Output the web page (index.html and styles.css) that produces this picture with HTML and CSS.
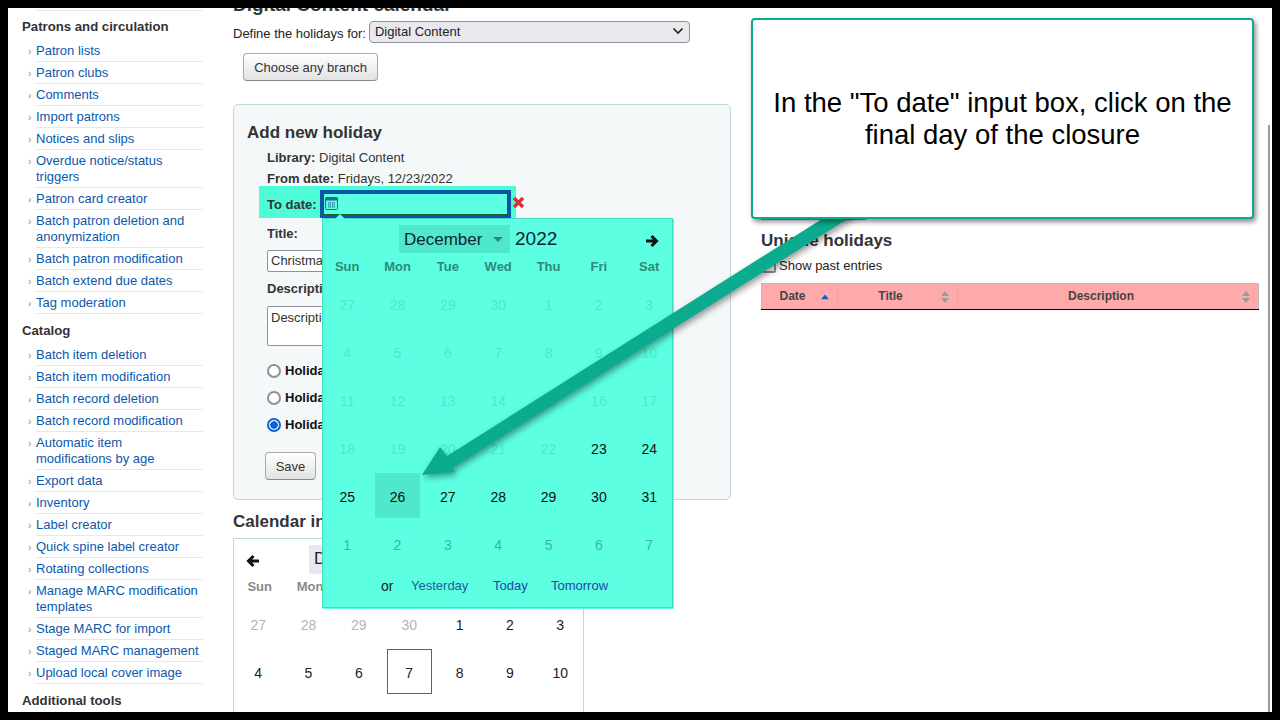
FILE: index.html
```html
<!DOCTYPE html>
<html>
    <head>
        <meta charset="utf-8">
        <title>Holidays calendar</title>
        <link rel="stylesheet" href="styles.css">
    </head>
    <body>
        <div class="screen">
            <nav class="sidebar">
                <h5>Patrons and circulation</h5>
                <ul>
                    <li><a>Patron lists</a></li>
                    <li><a>Patron clubs</a></li>
                    <li><a>Comments</a></li>
                    <li><a>Import patrons</a></li>
                    <li><a>Notices and slips</a></li>
                    <li><a>Overdue notice/status triggers</a></li>
                    <li><a>Patron card creator</a></li>
                    <li><a>Batch patron deletion and anonymization</a></li>
                    <li><a>Batch patron modification</a></li>
                    <li><a>Batch extend due dates</a></li>
                    <li><a>Tag moderation</a></li>
                </ul>
                <h5>Catalog</h5>
                <ul>
                    <li><a>Batch item deletion</a></li>
                    <li><a>Batch item modification</a></li>
                    <li><a>Batch record deletion</a></li>
                    <li><a>Batch record modification</a></li>
                    <li><a>Automatic item<br>modifications by age</a></li>
                    <li><a>Export data</a></li>
                    <li><a>Inventory</a></li>
                    <li><a>Label creator</a></li>
                    <li><a>Quick spine label creator</a></li>
                    <li><a>Rotating collections</a></li>
                    <li><a>Manage MARC modification templates</a></li>
                    <li><a>Stage MARC for import</a></li>
                    <li><a>Staged MARC management</a></li>
                    <li><a>Upload local cover image</a></li>
                </ul>
                <h5>Additional tools</h5>
            </nav>

            <main class="main">
                <h2 class="page-title">Digital Content calendar</h2>
                <div class="branch-row">
                    <span class="branch-label">Define the holidays for:</span>
                    <div class="select-box">
                        <span>Digital Content</span>
                        <svg width="12" height="8" viewBox="0 0 12 8"><path d="M1.500 1.500 6 6l4.500-4.500" fill="none" stroke="#222" stroke-width="1.600"/></svg>
                    </div>
                </div>
                <button class="btn btn-branch">Choose any branch</button>

                <section class="panel">
                    <h3>Add new holiday</h3>
                    <p class="line line-lib"><b>Library:</b> Digital Content</p>
                    <p class="line line-from"><b>From date:</b> Fridays, 12/23/2022</p>
                    <div class="to-date">
                        <b>To date:</b>
                        <div class="date-input">
                            <svg width="13" height="13" viewBox="0 0 13 13"><rect x="0.500" y="0.500" width="12" height="12" rx="1" fill="none" stroke="#1c6f8c"/><rect x="0.500" y="0.500" width="12" height="3" fill="#1c6f8c"/><path d="M3 6h7M3 8h7M3 10h7M5 5v6M8 5v6" stroke="#1c6f8c" stroke-dasharray="1 1"/></svg>
                        </div>
                        <svg class="clear-x" width="13" height="13" viewBox="0 0 13 13"><path d="M2 2l9 9M11 2l-9 9" stroke="#d3303c" stroke-width="3.400"/></svg>
                    </div>
                    <p class="line field-label"><b>Title:</b></p>
                    <div class="text-input">Christmas</div>
                    <p class="line field-label line-desc"><b>Description:</b></p>
                    <div class="text-area">Description</div>
                    <div class="radio-row"><span class="radio"></span><b>Holiday on a range</b></div>
                    <div class="radio-row"><span class="radio"></span><b>Holiday repeated</b></div>
                    <div class="radio-row"><span class="radio radio-on"></span><b>Holidays on a range</b></div>
                    <button class="btn btn-save">Save</button>
                </section>

                <h3 class="cal-title">Calendar information</h3>
                <div class="calendar">
                    <div class="cal-head">
                        <svg class="cal-arrow" width="14" height="14" viewBox="0 0 14 14"><path d="M13 7H3M7.500 2 2.500 7l5 5" fill="none" stroke="#111" stroke-width="3"/></svg>
                        <span class="month month-back">December</span>
                    </div>
                    <div class="cal-grid">
                        <span class="wd">Sun</span><span class="wd">Mon</span><span class="wd">Tue</span><span class="wd">Wed</span><span class="wd">Thu</span><span class="wd">Fri</span><span class="wd">Sat</span>
                        <span class="day back-old">27</span><span class="day back-old">28</span><span class="day back-old">29</span><span class="day back-old">30</span><span class="day">1</span><span class="day">2</span><span class="day">3</span>
                        <span class="day">4</span><span class="day">5</span><span class="day">6</span><span class="day"><i class="today">7</i></span><span class="day">8</span><span class="day">9</span><span class="day">10</span>
                    </div>
                </div>
            </main>

            <aside class="side">
                <div class="hidden-btn"></div>
                <h3>Unique holidays</h3>
                <label class="past"><span class="check"></span>Show past entries</label>
                <table class="holidays">
                    <thead>
                        <tr>
                            <th class="col-date">Date<svg class="sort" width="8" height="5" viewBox="0 0 8 5"><path d="M4 0l4 5H0z" fill="#0b5fc4"/></svg></th>
                            <th class="col-title">Title<svg class="sort" width="8" height="12" viewBox="0 0 8 12"><path d="M4 0l4 5H0zM4 12 0 7h8z" fill="#9a9a9a"/></svg></th>
                            <th>Description<svg class="sort" width="8" height="12" viewBox="0 0 8 12"><path d="M4 0l4 5H0zM4 12 0 7h8z" fill="#9a9a9a"/></svg></th>
                        </tr>
                    </thead>
                </table>
            </aside>

            <!-- date picker open over the form -->
            <div class="picker">
                <span class="picker-notch"></span>
                <div class="cal-head picker-head">
                    <span class="month">December<svg width="10" height="5" viewBox="0 0 10 5"><path d="M0 0h10L5 5z" fill="#2c8a78"/></svg></span>
                    <span class="year">2022</span>
                    <svg class="cal-arrow" width="14" height="14" viewBox="0 0 14 14"><path d="M1 7h10M6.500 2l5 5-5 5" fill="none" stroke="#111" stroke-width="3"/></svg>
                </div>
                <div class="cal-grid">
                    <span class="wd">Sun</span><span class="wd">Mon</span><span class="wd">Tue</span><span class="wd">Wed</span><span class="wd">Thu</span><span class="wd">Fri</span><span class="wd">Sat</span>
                    <span class="day off">27</span><span class="day off">28</span><span class="day off">29</span><span class="day off">30</span><span class="day off">1</span><span class="day off">2</span><span class="day off">3</span>
                    <span class="day off">4</span><span class="day off">5</span><span class="day off">6</span><span class="day off">7</span><span class="day off">8</span><span class="day off">9</span><span class="day off">10</span>
                    <span class="day off">11</span><span class="day off">12</span><span class="day off">13</span><span class="day off">14</span><span class="day off">15</span><span class="day off">16</span><span class="day off">17</span>
                    <span class="day off">18</span><span class="day off">19</span><span class="day off">20</span><span class="day off">21</span><span class="day off">22</span><span class="day">23</span><span class="day">24</span>
                    <span class="day">25</span><span class="day"><i class="picked">26</i></span><span class="day">27</span><span class="day">28</span><span class="day">29</span><span class="day">30</span><span class="day">31</span>
                    <span class="day next">1</span><span class="day next">2</span><span class="day next">3</span><span class="day next">4</span><span class="day next">5</span><span class="day next">6</span><span class="day next">7</span>
                </div>
                <div class="shortcuts">
                    <span class="or">or</span>
                    <a class="sc-y">Yesterday</a>
                    <a class="sc-t">Today</a>
                    <a class="sc-m">Tomorrow</a>
                </div>
            </div>

            <svg class="arrow" width="1264" height="704" viewBox="8 8 1264 704">
                <path d="M422 475 440 447 447 456 860 195 868 206 452 468 455 472Z" fill="#0aab8e"/>
            </svg>

            <div class="callout">In the "To date" input box, click on the final day of the closure</div>

            <div class="scroll-line"></div>
        </div>
    </body>
</html>
```

FILE: styles.css
```css
* {
    box-sizing: border-box;
}

body {
    margin: 0;
    height: 720px;
    padding: 8px;
    background: #000;
    font-family: "Liberation Sans", Arial, sans-serif;
    font-size: 13px;
    color: #333;
    overflow: hidden;
}

.screen {
    position: relative;
    display: flex;
    width: 1264px;
    height: 704px;
    background: #fff;
    overflow: hidden;
}

/* sidebar */

.sidebar {
    flex: none;
    width: 225px;
    padding: 2px 0 0 14px;
}

.sidebar h5 {
    margin: 9px 0 5px;
    font-size: 13.200px;
    line-height: 16px;
    color: #333;
}

.sidebar h5:first-child {
    margin: 0 0 6px;
    padding-top: 9px;
    background: linear-gradient(#e8e8e8, #e8e8e8) 14px 0 / 167px 1px no-repeat;
    height: 24px;
}

.sidebar ul {
    margin: 0;
    padding: 0;
    list-style: none;
    width: 181px;
}

.sidebar li {
    position: relative;
    margin-left: 14px;
    padding: 3px 0 2px;
    border-bottom: 1px solid #e8e8e8;
    line-height: 16px;
}

.sidebar li::before {
    content: "›";
    position: absolute;
    left: -8px;
    top: 4px;
    color: #888;
    font-size: 10px;
}

.sidebar a {
    color: #0a58ad;
}

/* middle column */

.main {
    flex: none;
    width: 498px;
    margin-right: 30px;
    margin-top: -13px;
}

.page-title {
    margin: 0;
    font-size: 19px;
    line-height: 20px;
    color: #333;
}

.branch-row {
    display: flex;
    align-items: center;
    gap: 3px;
    height: 22px;
    margin-top: 6px;
    color: #222;
}

.branch-label {
    padding-top: 2px;
}

.select-box {
    display: flex;
    align-items: center;
    justify-content: space-between;
    width: 321px;
    height: 22px;
    padding: 0 5px 2px 5px;
    background: #e9e9ed;
    border: 1px solid #8f8f9d;
    border-radius: 4px;
}

.btn {
    display: block;
    height: 28px;
    padding: 0;
    font: inherit;
    color: #333;
    background: linear-gradient(#fff, #e2e2e2);
    border: 1px solid #a9a9a9;
    border-bottom-color: #888;
    border-radius: 4px;
}

.btn-branch {
    width: 135px;
    margin: 10px 0 23px 10px;
}

.panel {
    height: 396px;
    padding: 19px 0 0 13px;
    background: #f4f8f9;
    border: 1px solid #bcd9dc;
    border-radius: 5px;
}

.panel h3 {
    margin: 0 0 7px;
    font-size: 17px;
    line-height: 18px;
    color: #333;
}

.line {
    margin: 0 0 0 20px;
    height: 21px;
    line-height: 16px;
}

.line-lib {
    padding-top: 1px;
}

.line-from {
    height: 16px;
    padding-top: 1px;
}

.to-date {
    display: flex;
    align-items: flex-start;
    width: 257px;
    height: 32px;
    margin-left: 12px;
    padding: 4px 0 0 8px;
    background: #4ffcd8;
}

.to-date b {
    flex: none;
    width: 53px;
    padding-top: 7px;
    line-height: 16px;
}

.date-input {
    flex: none;
    width: 191px;
    height: 28px;
    padding: 4px 0 0 2px;
    background: #5cffe1;
    border: 3px solid #0b58a6;
    box-shadow: inset 0 0 0 1px #1c5a30;
}

.clear-x {
    flex: none;
    margin: 6px 0 0 1px;
}

.field-label {
    margin-top: 8px;
}

.text-input {
    width: 200px;
    height: 22px;
    margin: 3px 0 0 20px;
    padding: 2px 3px;
    background: #fff;
    border: 1px solid #8f8f9d;
    border-radius: 2px;
}

.line-desc {
    margin-top: 9px;
}

.text-area {
    width: 200px;
    height: 40px;
    margin: 4px 0 10px 20px;
    padding: 3px;
    background: #fff;
    border: 1px solid #8f8f9d;
    border-radius: 2px;
}

.radio-row {
    display: flex;
    align-items: center;
    gap: 4px;
    height: 27px;
    margin-left: 20px;
    padding-top: 2px;
    color: #111;
}

.radio {
    width: 14px;
    height: 14px;
    border: 2px solid #8f8f9d;
    border-radius: 50%;
    background: #fff;
}

.radio-on {
    border-color: #0b62d6;
    background: radial-gradient(circle, #0b62d6 0 3.500px, #fff 4px);
}

.btn-save {
    width: 51px;
    margin: 15px 0 0 18px;
}

.cal-title {
    margin: 12px 0 6px;
    font-size: 17px;
    line-height: 20px;
    color: #333;
}

.calendar {
    width: 351px;
    height: 200px;
    border: 1px solid #b6dcdc;
    border-bottom: 0;
}

.cal-head {
    position: relative;
    height: 39px;
}

.calendar .cal-arrow {
    position: absolute;
    left: 12px;
    top: 15px;
}

.calendar .wd {
    padding-left: 3px;
}

.month-back {
    position: absolute;
    left: 75px;
    top: 6px;
    height: 29px;
    padding: 4px 5px;
    background: #e9e9ed;
    font-size: 17px;
    color: #222;
}

.cal-grid {
    display: grid;
    grid-template-columns: repeat(7, 50.350px);
    grid-template-rows: 23px;
    grid-auto-rows: 48px;
    margin-left: -1px;
}

.wd {
    display: flex;
    justify-content: center;
    margin-top: 1px;
    font-weight: bold;
    line-height: 16px;
    color: #8a8a8a;
    align-self: start;
}

.day {
    display: flex;
    align-items: center;
    justify-content: center;
    font-size: 14px;
    color: #222;
}

.day i {
    display: flex;
    align-items: center;
    justify-content: center;
    width: 45px;
    height: 45px;
    margin-top: -3px;
    padding-top: 3px;
    font-style: normal;
}

.back-old {
    color: #b4b4b4;
}

.today {
    border: 1px solid #5f6f1f;
}

/* date picker */

.picker {
    position: absolute;
    left: 314px;
    top: 210px;
    width: 351px;
    height: 390px;
    background: #5cffe1;
    border: 1px solid #3fdcc0;
    box-shadow: 1px 1px 0 #5cffe1;
}

.picker-notch {
    position: absolute;
    left: 12px;
    top: -5px;
    width: 0;
    height: 0;
    border: 5px solid transparent;
    border-top: 0;
    border-bottom-color: #5cffe1;
}

.picker-head {
    display: flex;
    padding: 6px 0 0 76px;
}

.picker .month {
    display: flex;
    align-items: center;
    justify-content: space-between;
    width: 111px;
    height: 28px;
    padding: 1px 7px 0 5px;
    background: #50e8cc;
    font-size: 17px;
    color: #123;
}

.year {
    margin-left: 5px;
    font-size: 19px;
    line-height: 28px;
    color: #123;
}

.picker .cal-arrow {
    position: absolute;
    right: 13px;
    top: 15px;
}

.picker .wd {
    color: #2f8a78;
}

.picker .day {
    color: #111;
}

.picker .off {
    color: #45ecca;
}

.picker .next {
    color: #3ab5a0;
}

.picked {
    background: #50e8cc;
}

.shortcuts {
    position: relative;
    height: 32px;
    margin-top: 1px;
    font-size: 14px;
    line-height: 32px;
}

.shortcuts a,
.shortcuts span {
    position: absolute;
    top: 0;
}

.or {
    left: 58px;
    color: #222;
}

.shortcuts a {
    font-size: 13px;
}

.sc-y {
    left: 88px;
    color: #1a5f96;
}

.sc-t {
    left: 170px;
    color: #2444a8;
}

.sc-m {
    left: 228px;
    color: #2444a8;
}

/* right column */

.side {
    flex: none;
    width: 498px;
}

.hidden-btn {
    width: 105px;
    height: 212px;
    border-bottom: 1px solid #999;
}

.side h3 {
    margin: 12px 0 0;
    font-size: 17px;
    line-height: 18px;
    color: #333;
}

.past {
    display: flex;
    align-items: center;
    gap: 3px;
    height: 16px;
    margin-top: 7px;
    color: #222;
}

.check {
    width: 14px;
    height: 14px;
    margin: 2px 0 0 1px;
    background: #fff;
    border: 2px solid #8f8f9d;
    border-radius: 2px;
}

.holidays {
    width: 498px;
    margin-top: 10px;
    border-collapse: collapse;
    table-layout: fixed;
}

.holidays th {
    position: relative;
    height: 26px;
    padding: 0 14px 2px 0;
    background: #ffaaaa;
    border: 1px solid #bbb;
    border-bottom: 1px solid #000;
    font-size: 12px;
    color: #444;
}

.col-date {
    width: 76px;
}

.col-title {
    width: 120px;
}

.sort {
    position: absolute;
    right: 8px;
    top: 50%;
    transform: translateY(-50%);
}

/* overlays */

.arrow {
    position: absolute;
    left: 0;
    top: 0;
    filter: drop-shadow(2px 3px 3px rgba(0, 0, 0, 0.4));
}

.callout {
    position: absolute;
    left: 743px;
    top: 10px;
    display: flex;
    align-items: center;
    justify-content: center;
    width: 503px;
    height: 201px;
    padding: 0 14px;
    background: #fff;
    border: 2px solid #0aab8e;
    border-radius: 4px;
    box-shadow: 2px 3px 5px rgba(0, 0, 0, 0.45);
    font-size: 27.500px;
    line-height: 32px;
    text-align: center;
    color: #000;
}

.scroll-line {
    position: absolute;
    left: 1260px;
    top: 117px;
    bottom: 0;
    width: 2px;
    background: #9a9a9a;
}
```
